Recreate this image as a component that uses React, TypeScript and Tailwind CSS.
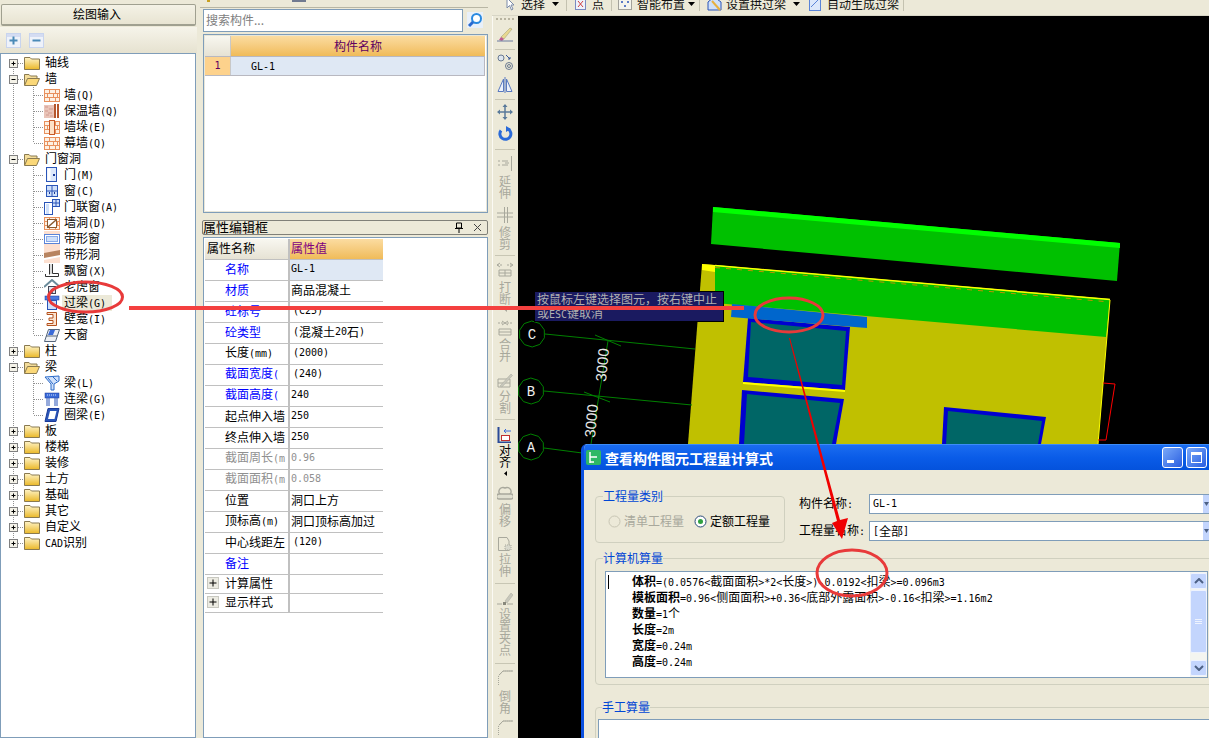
import React from "react";

/* Latin runs use a narrow 6px-wide mono face next to the 12px CJK text */
const L = (s: string) =>
  s.split(/([\x00-\x7f]+)/).map((p, i) =>
    /^[\x00-\x7f]+$/.test(p) ? (
      <span key={i} className="font-['DejaVu_Sans_Mono',monospace] text-[10px]">
        {p}
      </span>
    ) : (
      <React.Fragment key={i}>{p}</React.Fragment>
    )
  );

/* ---------- small drawn icons ---------- */
const Brick = ({ extra }: { extra?: React.ReactNode }) => (
  <svg width="16" height="16" viewBox="0 0 16 16">
    <rect x="0.5" y="2.5" width="15" height="12" fill="#fdf0e2" stroke="#e8905c" />
    <path d="M0 6.5H16M0 10.5H16M5.5 3V6M11.5 3V6M3.5 7V10M9.5 7V10M13.5 7V10M5.5 11V14M11.5 11V14" stroke="#e8905c" fill="none" />
    {extra}
  </svg>
);
const I = ({ children }: { children: React.ReactNode }) => (
  <svg width="16" height="16" viewBox="0 0 16 16">{children}</svg>
);
const treeIcons: Record<string, React.ReactNode> = {
  brick: <Brick />,
  insul: (
    <I>
      <rect x="0" y="2" width="10" height="13" fill="#eac4b8" />
      <path d="M1 4h3M5 6h4M1 8h3M4 10h4M2 12h3M6 13h3" stroke="#d09a90" />
      <rect x="10" y="1" width="2" height="14" fill="#b5562c" />
      <rect x="13" y="1" width="2" height="14" fill="#b5562c" />
    </I>
  ),
  pier: <Brick extra={<rect x="5.5" y="1.5" width="5" height="14" fill="#fde2c8" stroke="#c85a28" />} />,
  door: (
    <I>
      <rect x="2.5" y="0.5" width="10" height="14" fill="#dce8fb" stroke="#2a55b8" />
      <rect x="3.5" y="1.5" width="3" height="12" fill="#fff" />
      <rect x="9" y="7" width="2" height="2" fill="#1a3a98" />
    </I>
  ),
  window: (
    <I>
      <rect x="2.5" y="2.5" width="11" height="11" fill="#cfe0fa" stroke="#2a55b8" />
      <path d="M8 2V14M2 8H14" stroke="#2a55b8" />
      <rect x="5" y="9" width="1" height="2" fill="#1a3a98" />
      <rect x="10" y="9" width="1" height="2" fill="#1a3a98" />
    </I>
  ),
  doorwin: (
    <I>
      <rect x="0.5" y="3.5" width="8" height="12" fill="#fff" stroke="#2a55b8" />
      <rect x="2" y="5" width="3" height="10" fill="#cfe0fa" />
      <rect x="8.5" y="0.5" width="7" height="7" fill="#cfe0fa" stroke="#2a55b8" />
      <path d="M12 0V8M8 4H16" stroke="#2a55b8" />
    </I>
  ),
  hole: <Brick extra={<><rect x="3.5" y="4.5" width="9" height="8" fill="#fff" stroke="#8a5a30" /><path d="M4 12L12 5" stroke="#8a5a30" strokeWidth="1.5" /></>} />,
  strip: (
    <I>
      <rect x="0" y="0" width="16" height="16" fill="#fde0d0" />
      <rect x="0.5" y="3.5" width="15" height="9" fill="#fff" stroke="#5a84d8" />
      <rect x="2.5" y="5.5" width="11" height="5" fill="#cfe0fa" stroke="#8aaae8" />
    </I>
  ),
  striphole: (
    <I>
      <rect x="0" y="0" width="16" height="16" fill="#fde0d0" />
      <path d="M0 6L16 3V9L0 12Z" fill="#b88460" />
      <path d="M0 11L16 8V10L0 13Z" fill="#fff" />
    </I>
  ),
  bay: (
    <I>
      <path d="M5.5 1V11.5M8.5 1V10.5H14.5V13.5H1.5V11" stroke="#333" fill="#fff" />
      <rect x="6" y="1" width="2" height="10" fill="#ddd" />
    </I>
  ),
  dormer: (
    <I>
      <path d="M0 8L8 1L16 8" stroke="#6a8a9a" strokeWidth="2" fill="none" />
      <rect x="4.5" y="7.5" width="7" height="7" fill="#dde6f0" stroke="#445" />
      <rect x="7" y="10" width="2" height="4" fill="#667" />
    </I>
  ),
  lintel: (
    <I>
      <rect x="1" y="1" width="14" height="4" fill="#4a7ae0" stroke="#1a3a98" strokeWidth="0.5" />
      <rect x="3.5" y="5.5" width="9" height="9" fill="#cfe0fa" stroke="#2a55b8" />
    </I>
  ),
  niche: (
    <I>
      <path d="M3 1.5H12.5V14.5H3V12.5H9V9.5H5V7H9V3.5H3Z" fill="#fbe3cf" stroke="#b4521e" />
    </I>
  ),
  sky: (
    <I>
      <path d="M0.5 14.5L4.5 2.5H15.5L11.5 14.5Z" fill="#eef0f4" stroke="#55657a" />
      <path d="M6 3H11L9 8H4Z" fill="#3a6ad8" />
      <path d="M2 9H13" stroke="#55657a" />
    </I>
  ),
  beam: (
    <I>
      <path d="M1 2L15 1V6L10 9V15H7V9Z" fill="#cfe0fa" stroke="#2a6ac8" />
      <path d="M4 3L9 9M9 2L13 6" stroke="#2a6ac8" />
    </I>
  ),
  link: (
    <I>
      <rect x="1" y="2" width="14" height="5" fill="#3a6ad8" stroke="#1a3a98" strokeWidth="0.5" />
      <path d="M3 7V15M5 7V15M11 7V15M13 7V15" stroke="#2a55b8" />
      <path d="M3 4H13" stroke="#cfe0fa" strokeDasharray="1 1" />
    </I>
  ),
  ring: (
    <I>
      <path d="M4 1.5H15L12 14.5H1Z" fill="#2a55b8" stroke="#1a3a98" />
      <path d="M6 4H12.5L10.5 12H4Z" fill="#fff" />
    </I>
  ),
};

const Folder = ({ open }: { open: boolean }) =>
  open ? (
    <svg width="16" height="16" viewBox="0 0 16 16">
      <path d="M0.5 14V3.5H5L6.5 5H13V7" fill="#f3dc9a" stroke="#8a7a50" />
      <path d="M0.5 14.5L3.5 7.5H15.5L12.5 14.5Z" fill="#fbd878" stroke="#8a7a50" />
    </svg>
  ) : (
    <svg width="16" height="16" viewBox="0 0 16 16">
      <defs>
        <linearGradient id="fd" x1="0" y1="0" x2="0" y2="1">
          <stop offset="0" stopColor="#fff4c8" />
          <stop offset="1" stopColor="#eab828" />
        </linearGradient>
      </defs>
      <path d="M0.5 14.5V2.5H6L7.5 4H15.5V14.5Z" fill="url(#fd)" stroke="#8a7a50" />
    </svg>
  );

/* ---------- tree ---------- */
type Node = { t: string; lvl: 0 | 1; open?: boolean; icon?: string; end?: boolean; sel?: boolean };
const tree: Node[] = [
  { t: "轴线", lvl: 0, open: false },
  { t: "墙", lvl: 0, open: true },
  { t: "墙(Q)", lvl: 1, icon: "brick" },
  { t: "保温墙(Q)", lvl: 1, icon: "insul" },
  { t: "墙垛(E)", lvl: 1, icon: "pier" },
  { t: "幕墙(Q)", lvl: 1, icon: "brick", end: true },
  { t: "门窗洞", lvl: 0, open: true },
  { t: "门(M)", lvl: 1, icon: "door" },
  { t: "窗(C)", lvl: 1, icon: "window" },
  { t: "门联窗(A)", lvl: 1, icon: "doorwin" },
  { t: "墙洞(D)", lvl: 1, icon: "hole" },
  { t: "带形窗", lvl: 1, icon: "strip" },
  { t: "带形洞", lvl: 1, icon: "striphole" },
  { t: "飘窗(X)", lvl: 1, icon: "bay" },
  { t: "老虎窗", lvl: 1, icon: "dormer" },
  { t: "过梁(G)", lvl: 1, icon: "lintel", sel: true },
  { t: "壁龛(I)", lvl: 1, icon: "niche" },
  { t: "天窗", lvl: 1, icon: "sky", end: true },
  { t: "柱", lvl: 0, open: false },
  { t: "梁", lvl: 0, open: true },
  { t: "梁(L)", lvl: 1, icon: "beam" },
  { t: "连梁(G)", lvl: 1, icon: "link" },
  { t: "圈梁(E)", lvl: 1, icon: "ring", end: true },
  { t: "板", lvl: 0, open: false },
  { t: "楼梯", lvl: 0, open: false },
  { t: "装修", lvl: 0, open: false },
  { t: "土方", lvl: 0, open: false },
  { t: "基础", lvl: 0, open: false },
  { t: "其它", lvl: 0, open: false },
  { t: "自定义", lvl: 0, open: false },
  { t: "CAD识别", lvl: 0, open: false },
];

const dot = { stroke: "#909090", strokeDasharray: "1 1", fill: "none" };

function TreeRow({ n, i }: { n: Node; i: number }) {
  const last = i === tree.length - 1;
  const first = i === 0;
  return (
    <div className="flex h-4 items-center">
      <svg width={n.lvl ? 43 : 23} height="16" className="shrink-0">
        <path d={`M12.5 ${first ? 8 : 0}V${last ? 8 : 16}`} {...dot} />
        {n.lvl === 0 ? (
          <>
            <path d="M17 8.5H23" {...dot} />
            <rect x="8.5" y="4.5" width="8" height="8" fill="#f4f2e8" stroke="#808080" />
            <path d="M10.5 8.5H14.5" stroke="#000" />
            {!n.open && <path d="M12.5 6.5V10.5" stroke="#000" />}
          </>
        ) : (
          <>
            <path d={`M32.5 0V${n.end ? 8 : 16}`} {...dot} />
            <path d="M33 8.5H43" {...dot} />
          </>
        )}
      </svg>
      <span className="w-4 h-4 shrink-0">
        {n.lvl === 0 ? <Folder open={!!n.open} /> : treeIcons[n.icon as string]}
      </span>
      <span
        className={
          n.lvl === 0
            ? "ml-[5px] pb-[2px] h-4 text-[12px] leading-[14px] whitespace-nowrap text-black"
            : n.sel
              ? "ml-[2px] px-[2px] w-[50px] h-4 bg-[#ece9d8] text-[12px] leading-[14px] whitespace-nowrap text-black"
              : "ml-[4px] h-4 text-[12px] leading-[14px] whitespace-nowrap text-black"
        }
      >
        {L(n.t)}
      </span>
    </div>
  );
}

/* ---------- property grid ---------- */
type Prop = { k: string; v?: string; c: "blue" | "black" | "gray"; plus?: boolean; h?: string; indent?: boolean; sel?: boolean };
const props: Prop[] = [
  { k: "名称", v: "GL-1", c: "blue", sel: true },
  { k: "材质", v: "商品混凝土", c: "blue" },
  { k: "砼标号", v: "(C25)", c: "blue", indent: true },
  { k: "砼类型", v: "(混凝土20石)", c: "blue", indent: true },
  { k: "长度(mm)", v: "(2000)", c: "black", indent: true },
  { k: "截面宽度(", v: "(240)", c: "blue", indent: true },
  { k: "截面高度(", v: "240", c: "blue" },
  { k: "起点伸入墙", v: "250", c: "black" },
  { k: "终点伸入墙", v: "250", c: "black" },
  { k: "截面周长(m", v: "0.96", c: "gray" },
  { k: "截面面积(m", v: "0.058", c: "gray" },
  { k: "位置", v: "洞口上方", c: "black" },
  { k: "顶标高(m)", v: "洞口顶标高加过", c: "black" },
  { k: "中心线距左", v: "(120)", c: "black", indent: true },
  { k: "备注", v: "", c: "blue" },
  { k: "计算属性", c: "black", plus: true, h: "h-[19px]" },
  { k: "显示样式", c: "black", plus: true, h: "h-[19px]" },
];

const PlusBox = () => (
  <svg width="14" height="14" className="shrink-0 ml-[2px]">
    <rect x="0.5" y="0.5" width="11" height="11" fill="#ecebe2" stroke="#c8c8c0" />
    <path d="M2.5 6H9.5M6 2.5V9.5" stroke="#000" />
  </svg>
);

function PropRow({ p }: { p: Prop }) {
  const col = p.c === "blue" ? "text-[#0000ff]" : p.c === "gray" ? "text-[#909090]" : "text-black";
  return (
    <div className={`flex ${p.h ?? "h-[21px]"} border-b border-[#c0c0c0]`}>
      <div className={`w-[85px] shrink-0 flex items-center border-r-2 border-[#c0c0c0] text-[12px] leading-4 whitespace-nowrap overflow-hidden ${col}`}>
        {p.plus ? <PlusBox /> : <span className="w-5 shrink-0" />}
        {p.plus && <span className="w-[4px] shrink-0" />}
        <span className="pb-[2px]">{L(p.k)}</span>
      </div>
      <div
        className={`flex-1 flex items-center pb-[2px] text-[12px] leading-4 whitespace-nowrap overflow-hidden ${p.indent ? "pl-[3px]" : "pl-[1px]"} ${p.sel ? "bg-[#dfe8f4]" : ""} ${p.c === "gray" ? "text-[#909090]" : "text-black"}`}
      >
        {p.v ? L(p.v) : null}
      </div>
    </div>
  );
}

/* ---------- left-hand vertical tool bar ---------- */
const G = "#a8a89c";
const sideIcons: Record<string, React.ReactNode> = {
  brush: (
    <I>
      <path d="M4 11L13 2L15 3L7 13Z" fill="#e8d890" stroke="#9a9a70" strokeWidth="0.5" />
      <path d="M4 11L7 13L5 15L2 14Z" fill="#c05a90" />
      <path d="M0 15H16" stroke="#6a7aa0" />
    </I>
  ),
  circles: (
    <I>
      <circle cx="4" cy="4" r="3" fill="#dde6f0" stroke="#6a7a90" />
      <circle cx="12" cy="12" r="3.5" fill="none" stroke="#6a7a90" />
      <circle cx="12" cy="12" r="1.5" fill="none" stroke="#6a7a90" />
      <path d="M9 1L13 5M13 3V5H11" stroke="#3a5a9a" fill="none" />
    </I>
  ),
  mirror: (
    <I>
      <path d="M8 0V16" stroke="#5a7ac0" />
      <path d="M6.5 2V14.5H1ZM9.5 2V14.5H15Z" fill="#eef2fa" stroke="#5a7ac0" />
    </I>
  ),
  move: (
    <I>
      <path d="M8 1V15M1 8H15" stroke="#5a7a9a" strokeWidth="1.5" />
      <path d="M8 0L5.5 3H10.5ZM8 16L5.5 13H10.5ZM0 8L3 5.5V10.5ZM16 8L13 5.5V10.5Z" fill="#5a7a9a" />
    </I>
  ),
  rotate: (
    <I>
      <path d="M4 4.5A5.5 5.5 0 1 0 11 3" fill="none" stroke="#2a6ad8" strokeWidth="3" />
      <path d="M9 0V6L14 3Z" fill="#2a6ad8" />
    </I>
  ),
  extend: (
    <I>
      <path d="M14.5 0V15M1 5H3M1 9H3M5 5H11M5 9H11" stroke={G} />
      <path d="M8 7H12" stroke={G} />
    </I>
  ),
  trim: (
    <I>
      <path d="M7.5 0V16M10.5 0V16M0 6H16M0 10H16" stroke={G} />
    </I>
  ),
  break: (
    <I>
      <path d="M0 3H6M10 3H16" stroke={G} strokeDasharray="2 1" />
      <path d="M3 1L0 3L3 5M13 1L16 3L13 5" stroke={G} fill="none" />
      <path d="M2 8H14V14H2ZM2 11H14M8 8V14" stroke={G} fill="none" />
    </I>
  ),
  merge: (
    <I>
      <path d="M1 3H6M10 3H15" stroke={G} strokeDasharray="2 1" />
      <path d="M5 1L8 3L5 5M11 1L8 3L11 5" stroke={G} fill="none" />
      <path d="M2 9H14V15H2ZM2 12H14" stroke={G} fill="none" />
    </I>
  ),
  split: (
    <I>
      <path d="M1 7H13V15H1ZM1 11H13" stroke={G} fill="none" />
      <path d="M3 14L14 2L15.5 3.5L5 15Z" fill="#c8c8bc" stroke={G} strokeWidth="0.5" />
    </I>
  ),
  align: (
    <I>
      <path d="M1.5 0V15.5H14" stroke="#2a4a98" strokeWidth="2" fill="none" />
      <rect x="4.5" y="8.5" width="8" height="5" fill="#fff" stroke="#c03030" />
      <path d="M7 4H14M7 4L9 2M7 4L9 6" stroke="#3a6ad8" fill="none" />
    </I>
  ),
  offset: (
    <I>
      <path d="M4 9A4 4 0 0 1 8 2A4 4 0 0 1 12 9Z" fill="none" stroke={G} strokeWidth="1.5" />
      <path d="M2 8H14A2 2 0 0 1 14 13H2A2 2 0 0 1 2 8Z" fill="#e0dfd0" stroke={G} strokeWidth="1.5" />
    </I>
  ),
  stretch: (
    <I>
      <path d="M1.5 1.5H10L12 5V14.5H1.5Z" fill="none" stroke={G} />
      <path d="M8 9H14V14H8Z" fill="#d8d8cc" stroke={G} strokeDasharray="1 1" />
    </I>
  ),
  grip: (
    <I>
      <path d="M8 10L14 2L16 4L10 12Z" fill="#c8c8bc" stroke={G} strokeWidth="0.5" />
      <rect x="6" y="11" width="3" height="3" fill="#88887c" />
      <path d="M0 13H5M10 13H16" stroke={G} />
    </I>
  ),
  chamfer: (
    <I>
      <path d="M1.5 15V6L6 1H16" stroke={G} fill="none" strokeDasharray="1 1" />
      <path d="M2 5L6 1H16" stroke={G} fill="none" />
    </I>
  ),
};

type Side =
  | { sep: true; mt: string }
  | { caret: true; mt: string; dark?: boolean }
  | { icon: string; mt: string; text?: string; tmt?: string; dark?: boolean };

const side: Side[] = [
  { icon: "brush", mt: "mt-[4px]" },
  { sep: true, mt: "mt-[7px]" },
  { icon: "circles", mt: "mt-[4px]" },
  { icon: "mirror", mt: "mt-[7px]" },
  { sep: true, mt: "mt-[6px]" },
  { icon: "move", mt: "mt-[4px]" },
  { icon: "rotate", mt: "mt-[6px]" },
  { sep: true, mt: "mt-[7px]" },
  { icon: "extend", mt: "mt-[6px]", text: "延伸", tmt: "mt-[3px]" },
  { icon: "trim", mt: "mt-[8px]", text: "修剪", tmt: "mt-[3px]" },
  { sep: true, mt: "mt-[5px]" },
  { icon: "break", mt: "mt-[6px]", text: "打断", tmt: "mt-[3px]" },
  { caret: true, mt: "mt-[2px]" },
  { icon: "merge", mt: "mt-[8px]", text: "合并", tmt: "mt-[2px]" },
  { icon: "split", mt: "mt-[10px]", text: "分割", tmt: "mt-[2px]" },
  { sep: true, mt: "mt-[5px]" },
  { icon: "align", mt: "mt-[7px]", text: "对齐", tmt: "mt-[1px]", dark: true },
  { caret: true, mt: "mt-[3px]", dark: true },
  { icon: "offset", mt: "mt-[10px]", text: "偏移", tmt: "mt-[1px]" },
  { icon: "stretch", mt: "mt-[9px]", text: "拉伸", tmt: "mt-[1px]" },
  { sep: true, mt: "mt-[6px]" },
  { icon: "grip", mt: "mt-[7px]", text: "设置夹点", tmt: "mt-[1px]" },
  { sep: true, mt: "mt-[7px]" },
  { icon: "chamfer", mt: "mt-[6px]", text: "倒角", tmt: "mt-[4px]" },
  { icon: "chamfer", mt: "mt-[6px]" },
];

function SideBar() {
  return (
    <div className="w-[26px] shrink-0 flex flex-col items-center pr-px bg-[#ece9d8] border-l border-[#fbfaf4] overflow-hidden h-[722px]">
      <div className="h-[6px] shrink-0 w-full flex justify-center items-center">
        <div className="w-[18px] border-t-2 border-dotted border-[#b8b4a0]" />
      </div>
      {side.map((s, i) => {
        if ("sep" in s) return <div key={i} className={`${s.mt} w-[20px] h-px shrink-0 bg-[#c8c6b4]`} />;
        if ("caret" in s)
          return (
            <svg key={i} width="5" height="5" viewBox="0 0 5 5" className={`${s.mt} shrink-0`}>
              <path d="M4 0V5L1 2.5Z" fill={s.dark ? "#000" : G} />
            </svg>
          );
        return (
          <React.Fragment key={i}>
            <span className={`${s.mt} w-4 h-4 shrink-0 block`}>{sideIcons[s.icon]}</span>
            {s.text && (
              <span className={`${s.tmt} w-3 shrink-0 text-[12px] leading-3 break-all text-center ${s.dark ? "text-black" : "text-[#a8a89c]"}`}>
                {s.text}
              </span>
            )}
          </React.Fragment>
        );
      })}
    </div>
  );
}

/* ---------- top tool bar ---------- */
const Caret = ({ c }: { c: string }) => (
  <svg width="7" height="4" viewBox="0 0 7 4" className={`${c} shrink-0`}>
    <path d="M0 0H7L3.5 4Z" fill="#000" />
  </svg>
);
const Tsep = ({ c }: { c: string }) => <div className={`${c} w-px h-[14px] bg-[#c4c2b0] shrink-0`} />;

function TopBar() {
  return (
    <div className="h-[16px] shrink-0 overflow-hidden bg-[#ece9d8] border-b border-[#d8d6c6]">
      <div className="flex items-center h-[24px] -mt-[8px] whitespace-nowrap text-[12px] leading-4 text-[#111]">
        <svg width="9" height="14" viewBox="0 0 9 14" className="ml-[14px] shrink-0">
          <path d="M1 1V11L3.5 8.5L5.5 13L7 12L5 8H8Z" fill="#fff" stroke="#7a8aa8" />
        </svg>
        <span className="ml-[6px] w-[24px]">选择</span>
        <Caret c="ml-[7px]" />
        <Tsep c="ml-[7px]" />
        <svg width="12" height="14" viewBox="0 0 12 14" className="ml-[8px] shrink-0">
          <rect x="0.5" y="1.5" width="10" height="11" fill="#eef2fa" stroke="#7a8ac0" />
          <path d="M3 4L8 10M8 4L3 10" stroke="#d04040" />
        </svg>
        <span className="ml-[5px] w-[12px]">点</span>
        <Tsep c="ml-[7px]" />
        <svg width="14" height="14" viewBox="0 0 14 14" className="ml-[6px] shrink-0">
          <rect x="0.5" y="1.5" width="13" height="11" fill="#f4f4ec" stroke="#555" strokeDasharray="1 1" />
          <path d="M4 4V6M3 5H5M10 4V6M9 5H11M7 8V10M6 9H8" stroke="#2a55b8" />
        </svg>
        <span className="ml-[5px] w-[48px]">智能布置</span>
        <Caret c="ml-[3px]" />
        <Tsep c="ml-[4px]" />
        <svg width="16" height="14" viewBox="0 0 16 14" className="ml-[7px] shrink-0">
          <path d="M1 5L7 0L14 5V13H1Z" fill="#cfe0fa" stroke="#2a55b8" />
          <path d="M5 4L13 13" stroke="#e8b040" strokeWidth="2" />
        </svg>
        <span className="ml-[3px] w-[60px]">设置拱过梁</span>
        <Caret c="ml-[7px]" />
        <svg width="12" height="14" viewBox="0 0 12 14" className="ml-[9px] shrink-0">
          <rect x="0.5" y="0.5" width="11" height="13" fill="#dce8fb" stroke="#5a84d8" />
          <path d="M2 10L9 3" stroke="#5a84d8" />
        </svg>
        <span className="ml-[6px] w-[72px]">自动生成过梁</span>
        <Tsep c="ml-[4px]" />
      </div>
    </div>
  );
}

/* ---------- CAD drawing ---------- */
function octagon(cx: number, cy: number, r: number) {
  const pts: string[] = [];
  for (let i = 0; i < 10; i++) {
    const a = (Math.PI * 2 * i) / 10 + 0.3;
    pts.push(`${(cx + r * Math.cos(a)).toFixed(1)},${(cy + r * Math.sin(a)).toFixed(1)}`);
  }
  return pts.join(" ");
}

function Drawing() {
  const axes = [
    { l: "C", x: 532, y: 334 },
    { l: "B", x: 531, y: 391 },
    { l: "A", x: 531, y: 447 },
  ];
  return (
    <svg className="absolute inset-0" width="691" height="722" viewBox="518 16 691 722">
      <polygon points="713,207 1120,243 1117,281 711,244" fill="#00c000" />
      <polygon points="713,207 1120,243 1120,248 713,212" fill="#00ff00" />
      <polygon points="702,264 1110,299 1098,444 688,444" fill="#c0c000" />
      <polygon points="702,264 715,265 715,272 702,270" fill="#ffff00" />
      <polygon points="715,265 1110,299 1106,337 715,303" fill="#00c000" />
      <path d="M715 265.5L1110 299.5" stroke="#ffff00" strokeWidth="1.5" />
      <path d="M715 267.5L1110 302" stroke="#c09000" strokeDasharray="5 6" />
      <path d="M1110 300L1098 444" stroke="#ffff00" />
      <polygon points="748,318 850,327 845,390 743,382" fill="#0000d0" />
      <polygon points="751,322 846,331 842,385 748,377" fill="#006666" />
      <polygon points="743,382 845,390 845,392 743,384" fill="#ffff00" />
      <polygon points="742,390 844,399 836,444 739,444" fill="#0000d0" />
      <polygon points="747,394 840,403 832,444 744,444" fill="#006666" />
      <polygon points="944,407 1046,417 1041,444 942,444" fill="#0000d0" />
      <polygon points="948,411 1042,421 1038,444 946,444" fill="#006666" />
      <polygon points="732,304 867,317 867,328 731,317" fill="#0066cc" />
      <polyline points="1103,383 1115,384 1106,440 1098,440" fill="none" stroke="#ff0000" />
      <path d="M545 334L695 349M544 391L692 405M544 448L590 454" stroke="#008000" />
      <path d="M608 341L590 450M595 335L621 346M584 392L610 402" stroke="#008000" />
      {axes.map((a) => (
        <g key={a.l}>
          <polygon points={octagon(a.x, a.y, 13)} fill="none" stroke="#008000" />
          <text x={a.x} y={a.y + 5} textAnchor="middle" fontSize="14" fill="#f0f0f0" fontFamily="Liberation Mono, monospace">
            {a.l}
          </text>
        </g>
      ))}
      <text transform="translate(606 382) rotate(-85)" fontSize="15" fill="#e8e8e8" fontFamily="Liberation Sans, sans-serif">
        3000
      </text>
      <text transform="translate(595 438) rotate(-85)" fontSize="15" fill="#e8e8e8" fontFamily="Liberation Sans, sans-serif">
        3000
      </text>
    </svg>
  );
}

/* ---------- dialog ---------- */
const Radio = ({ on, off }: { on?: boolean; off?: boolean }) => (
  <svg width="13" height="13" viewBox="0 0 13 13" className="shrink-0">
    <circle cx="6.5" cy="6.5" r="5.5" fill={off ? "#ece9d8" : "#fff"} stroke={off ? "#c8c6b4" : "#2a4a78"} />
    {on && <circle cx="6.5" cy="6.5" r="2.5" fill="#30a040" />}
  </svg>
);
const Combo = ({ v }: { v: string }) => (
  <div className="flex-1 h-[20px] border border-[#7f9db9] bg-white flex items-center pl-[3px] text-[12px] leading-4 text-black relative">
    {L(v)}
    <div className="absolute right-0 top-0 bottom-0 w-[15px] bg-[#c3d5fd] flex items-center justify-start pl-[1px]">
      <svg width="5" height="4" viewBox="0 0 5 4"><path d="M0 0H5L2.5 4Z" fill="#4d6185" /></svg>
    </div>
  </div>
);
const calc: [string, string][] = [
  ["体积", "=(0.0576<截面面积>*2<长度>)-0.0192<扣梁>=0.096m3"],
  ["模板面积", "=0.96<侧面面积>+0.36<底部外露面积>-0.16<扣梁>=1.16m2"],
  ["数量", "=1个"],
  ["长度", "=2m"],
  ["宽度", "=0.24m"],
  ["高度", "=0.24m"],
];
const ScrollBtn = ({ up }: { up?: boolean }) => (
  <div className="h-[16px] shrink-0 bg-[#c3d5fd] border border-[#eef3fe] rounded-[2px] flex items-center justify-center">
    <svg width="10" height="6" viewBox="0 0 10 6">
      <path d={up ? "M1 5L5 1L9 5" : "M1 1L5 5L9 1"} fill="none" stroke="#4d6185" strokeWidth="2" />
    </svg>
  </div>
);

function Dialog() {
  return (
    <div className="absolute left-[63px] top-[428px] w-[640px] h-[294px] flex flex-col bg-[#ece9d8] rounded-t-[6px] border-l-[3px] border-[#0a50e0] overflow-hidden">
      <div className="h-[26px] shrink-0 flex items-center bg-gradient-to-b from-[#1a6cf0] via-[#0a5ce8] to-[#0452dc] border-t border-[#3c8cf8]">
        <svg width="15" height="15" viewBox="0 0 15 15" className="ml-[2px] shrink-0">
          <rect width="15" height="15" rx="2" fill="#2eb866" />
          <path d="M4 2V13M4 7H11M4 12H8" stroke="#fff" strokeWidth="1.5" fill="none" />
        </svg>
        <span className="ml-[4px] w-[168px] text-[14px] leading-4 font-bold text-white whitespace-nowrap">查看构件图元工程量计算式</span>
        <div className="ml-[389px] flex gap-[3px]">
          <div className="w-[21px] h-[21px] rounded-[3px] border border-white bg-gradient-to-br from-[#7aa8f8] to-[#2a5ce0] flex items-end justify-start pl-[4px] pb-[4px]">
            <div className="w-[7px] h-[3px] bg-white" />
          </div>
          <div className="w-[21px] h-[21px] rounded-[3px] border border-white bg-gradient-to-br from-[#7aa8f8] to-[#2a5ce0] flex items-center justify-center">
            <div className="w-[11px] h-[11px] border border-white border-t-[3px]" />
          </div>
          <div className="w-[21px] h-[21px] rounded-[3px] border border-white bg-[#d8553a]" />
        </div>
      </div>
      <div className="flex-1 pl-[11px] pt-[19px] min-h-0">
        <div className="flex">
          <fieldset className="w-[190px] h-[54px] shrink-0 border border-[#d0d0bf] rounded-[4px] px-[12px]">
            <legend className="ml-[-5px] text-[12px] leading-[14px] text-[#0046d5]">工程量类别</legend>
            <div className="flex items-center mt-[10px] text-[12px] leading-4 whitespace-nowrap">
              <Radio off />
              <span className="ml-[3px] w-[70px] text-[#a8a89c]">清单工程量</span>
              <Radio on />
              <span className="ml-[3px] text-black">定额工程量</span>
            </div>
          </fieldset>
          <div className="flex-1 ml-[14px] pt-[5px] flex flex-col gap-[7px] pr-[2px]">
            <div className="flex items-center">
              <span className="w-[70px] shrink-0 text-[12px] leading-4 text-black whitespace-nowrap">{L("构件名称:")}</span>
              <Combo v="GL-1" />
            </div>
            <div className="flex items-center">
              <span className="w-[70px] shrink-0 text-[12px] leading-4 text-black whitespace-nowrap">{L("工程量名称:")}</span>
              <Combo v="[全部]" />
            </div>
          </div>
        </div>
        <fieldset className="mt-[8px] h-[134px] border border-[#d0d0bf] rounded-[4px] pl-[9px] pr-[12px]">
          <legend className="ml-[-2px] text-[12px] leading-[14px] text-[#0046d5]">计算机算量</legend>
          <div className="mt-[6px] w-[603px] h-[107px] border border-[#7f9db9] bg-white flex">
            <div className="relative flex-1 pl-[26px] pt-[1px] text-[12px] leading-4 text-black whitespace-nowrap">
              <div className="absolute left-[2px] top-[3px] w-px h-[14px] bg-black" />
              {calc.map(([a, b]) => (
                <div key={a} className="h-4">
                  <b className="font-bold">{a}</b>
                  {L(b)}
                </div>
              ))}
            </div>
            <div className="w-[17px] shrink-0 flex flex-col bg-[#f4f5f0] py-px">
              <ScrollBtn up />
              <div className="mt-px h-[63px] shrink-0 bg-[#c3d5fd] border border-[#eef3fe] rounded-[2px] flex flex-col items-center justify-center gap-px">
                <div className="w-[7px] h-px bg-[#eef3fe]" />
                <div className="w-[7px] h-px bg-[#eef3fe]" />
                <div className="w-[7px] h-px bg-[#eef3fe]" />
              </div>
              <div className="flex-1" />
              <ScrollBtn />
            </div>
          </div>
        </fieldset>
        <fieldset className="mt-[15px] h-[60px] border border-[#d0d0bf] rounded-[4px] pl-[2px]">
          <legend className="ml-[4px] text-[12px] leading-[14px] text-[#0046d5]">手工算量</legend>
          <div className="mt-[5px] h-[40px] border border-[#7f9db9] bg-white" />
        </fieldset>
      </div>
    </div>
  );
}

/* ---------- red annotations, hand-drawn over the page ---------- */
function Annotations() {
  return (
    <svg className="absolute inset-0 pointer-events-none" width="1209" height="738" viewBox="0 0 1209 738">
      <ellipse cx="85.5" cy="297" rx="37" ry="15" fill="none" stroke="#e83a3a" strokeWidth="3" />
      <rect x="129" y="306" width="615" height="4" fill="#f4403f" />
      <ellipse cx="789" cy="315" rx="34" ry="17" fill="none" stroke="#e83a3a" strokeWidth="3" />
      <ellipse cx="852" cy="573" rx="35" ry="23" fill="none" stroke="#e83a3a" strokeWidth="3" />
      <polygon points="789,338 790,338 840,520 848,518 842,539 832,523 837,521" fill="#f00000" />
    </svg>
  );
}

export default function App() {
  return (
    <div className="relative w-[1209px] h-[738px] overflow-hidden flex bg-[#ece9d8] font-['Noto_Sans_CJK_SC','Liberation_Sans',sans-serif]">
      {/* left column */}
      <div className="w-[197px] shrink-0 flex flex-col h-full">
        <div className="mt-[4px] h-[22px] shrink-0 mx-px pr-[3px] pb-[2px] border border-[#a0a090] border-b-2 rounded-[2px] bg-gradient-to-b from-[#f4f2e6] to-[#e8e4d2] flex items-center justify-center text-[12px] leading-4 text-black">
          绘图输入
        </div>
        <div className="mt-px h-[26px] shrink-0 flex items-center gap-2 pl-[6px] bg-gradient-to-b from-[#f6f4ea] to-[#e6e2d0]">
          {["M7.5 3.5V11.5M3.5 7.5H11.5", "M3.5 7.5H11.5"].map((d) => (
            <svg key={d} width="15" height="15" viewBox="0 0 15 15">
              <rect x="0.5" y="0.5" width="14" height="14" fill="#eef2fa" stroke="#c8d4ee" />
              <rect x="1" y="1" width="13" height="3" fill="#d4dcf2" />
              <path d={d} stroke="#4a8ab8" strokeWidth="2" />
            </svg>
          ))}
        </div>
        <div className="flex-1 min-h-0 w-[196px] border border-[#7f9db9] bg-white pt-px overflow-hidden">
          {tree.map((n, i) => (
            <TreeRow key={n.t + i} n={n} i={i} />
          ))}
        </div>
      </div>

      {/* middle column */}
      <div className="w-[295px] shrink-0 flex flex-col h-full pl-[6px] pr-[4px]">
        <div className="h-[8px] shrink-0 border-b border-[#b8b6a4] -ml-[3px] flex items-start">
          <div className="ml-[7px] w-[3px] h-[2px] bg-[#c8a020]" />
          <div className="ml-[82px] w-[14px] h-[2px] bg-[#707a90]" />
        </div>
        <div className="h-[24px] shrink-0 flex items-center">
          <div className="w-[260px] h-[23px] border border-[#7f9db9] bg-white flex items-center pl-[2px] text-[12px] leading-4 text-[#808080]">
            搜索构件...
          </div>
          <svg width="16" height="16" viewBox="0 0 16 16" className="ml-[4px] shrink-0">
            <rect width="16" height="16" fill="#e8f0fa" />
            <circle cx="9.5" cy="6.5" r="4.5" fill="#fff" stroke="#2a8ae0" strokeWidth="2" />
            <path d="M6 10L2 14" stroke="#2a6ad0" strokeWidth="3" />
          </svg>
        </div>
        <div className="mt-[2px] h-[179px] shrink-0 border-2 border-[#e8e6d8] outline outline-1 outline-[#7f9db9] -outline-offset-1 bg-white w-[285px] pr-px">
          <div className="flex h-[20px]">
            <div className="w-[26px] bg-gradient-to-b from-[#f8f7f0] to-[#e6e2d4] border-r border-[#c8c8c8]" />
            <div className="flex-1 pb-px bg-gradient-to-b from-[#fbdca0] to-[#f0bb58] flex items-center justify-center text-[12px] leading-4 text-[#600060]">
              构件名称
            </div>
          </div>
          <div className="flex h-[20px] border-y border-[#b8b8c0]">
            <div className="w-[26px] bg-[#fdd28c] text-[#600060] text-[12px] leading-4 flex items-center justify-center border-r border-[#c8c8c8]">
              <span className="font-['DejaVu_Sans_Mono',monospace] text-[10px]">1</span>
            </div>
            <div className="flex-1 bg-[#dfe8f4] border-r border-[#b8b8c0] pl-[20px] pt-px flex items-center text-[12px] leading-4 text-black">{L("GL-1")}</div>
          </div>
        </div>
        <div className="mt-[7px] h-[15px] shrink-0 -ml-px w-[286px] border border-[#808078] rounded-[2px] flex items-center text-[13px] leading-[14px] text-black bg-[#ece9d8]">
          <span className="pb-[2px]">属性编辑框</span>
          <svg width="10" height="11" viewBox="0 0 10 11" className="ml-auto shrink-0">
            <path d="M2.5 1H7.5V6H2.5ZM1 6.5H9M5 6.5V11" stroke="#000" fill="none" />
          </svg>
          <svg width="9" height="9" viewBox="0 0 9 9" className="ml-[9px] mr-[5px] shrink-0">
            <path d="M1 1L8 8M8 1L1 8" stroke="#444" />
          </svg>
        </div>
        <div className="mt-[2px] flex-1 min-h-0 w-[285px] border border-[#7f9db9] bg-white pl-px pt-px">
          <div className="w-[178px]">
            <div className="flex h-[21px] border-b border-[#c0c0c0]">
              <div className="w-[85px] shrink-0 pl-[2px] pb-[2px] flex items-center border-r-2 border-[#c0c0c0] bg-gradient-to-b from-[#f8f7f0] to-[#e6e2d4] text-[12px] leading-4 text-black">
                属性名称
              </div>
              <div className="flex-1 pl-[1px] pb-[2px] flex items-center bg-gradient-to-b from-[#fbdca0] to-[#f0bb58] text-[12px] leading-4 text-[#800080]">属性值</div>
            </div>
            {props.map((p) => (
              <PropRow key={p.k} p={p} />
            ))}
          </div>
        </div>
      </div>

      {/* right column */}
      <div className="flex-1 min-w-0 flex flex-col h-full">
        <TopBar />
        <div className="flex-1 min-h-0 flex">
          <SideBar />
          <div className="relative flex-1 bg-black overflow-hidden">
            <Drawing />
            <div className="absolute left-[16px] top-[275px] w-[190px] h-[31px] bg-[#1a1a60] border border-black pl-[2px] text-[12px] leading-[14px] text-[#b0b0b0]">
              按鼠标左键选择图元，按右键中止
              <br />
              {L("或ESC键取消")}
            </div>
            <Dialog />
          </div>
        </div>
      </div>

      <Annotations />
    </div>
  );
}
